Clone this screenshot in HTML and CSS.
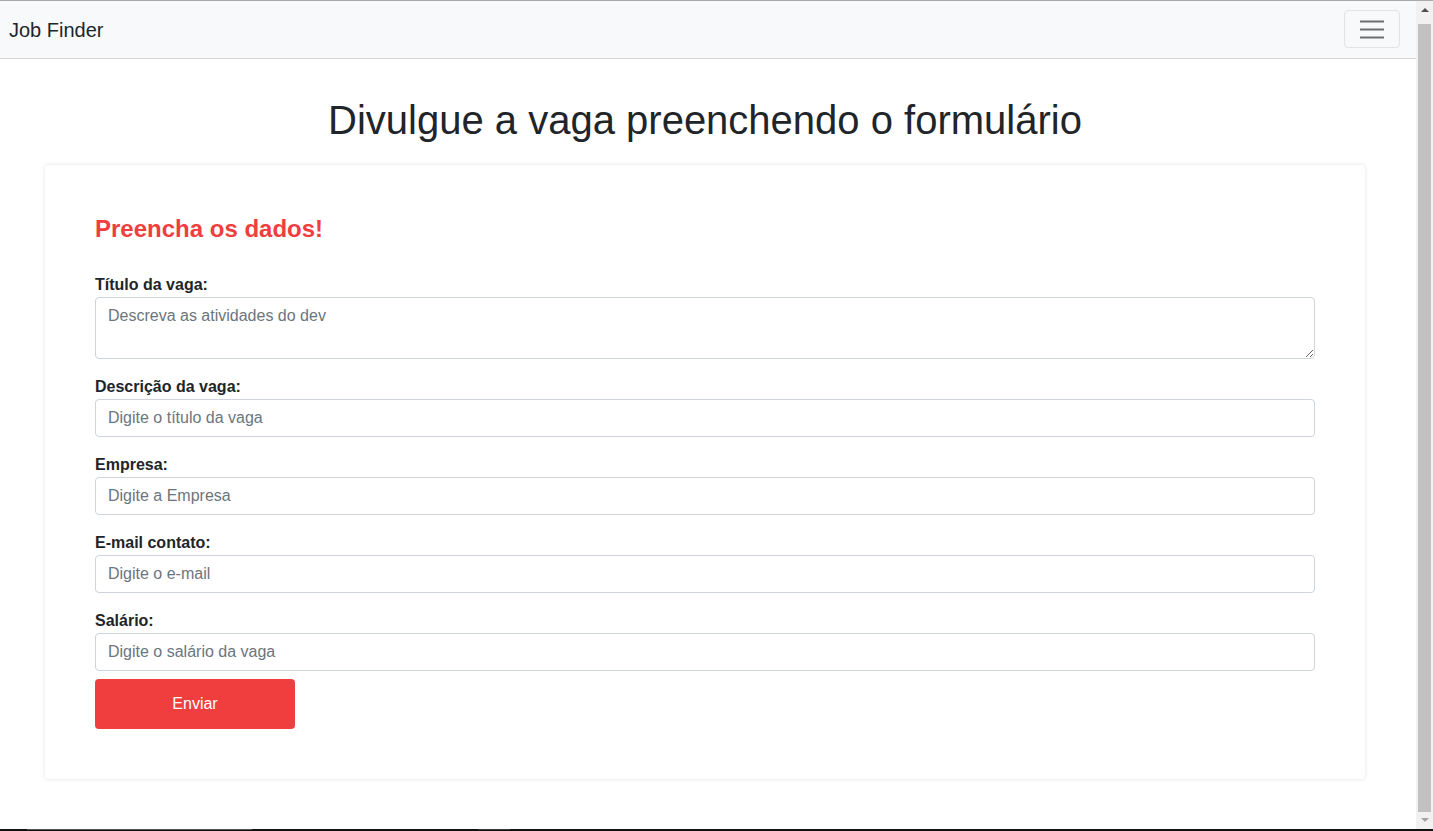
FILE: index.html
```html
<!DOCTYPE html>
<html lang="pt-BR">
<head>
<meta charset="utf-8">
<title>Job Finder</title>
<link rel="stylesheet" href="styles.css">
</head>
<body>
<div class="top-line"></div>
<div class="frame">
  <div class="page">
    <nav class="navbar">
      <a class="brand" href="#">Job Finder</a>
      <button class="toggler" type="button" aria-label="Menu">
        <svg width="30" height="30" viewBox="0 0 30 30" aria-hidden="true">
          <path d="M3 7.5h24M3 15.5h24M3 23.5h24" stroke="#6f6f6f" stroke-width="2" fill="none"/>
        </svg>
      </button>
    </nav>
    <main class="container">
      <h1 class="title">Divulgue a vaga preenchendo o formulário</h1>
      <section class="card">
        <h2 class="card-title">Preencha os dados!</h2>
        <form class="form">
          <div class="group">
            <label class="label" for="titulo">Título da vaga:</label>
            <textarea id="titulo" class="field area" placeholder="Descreva as atividades do dev"></textarea>
          </div>
          <div class="group">
            <label class="label" for="desc">Descrição da vaga:</label>
            <input id="desc" class="field" type="text" placeholder="Digite o título da vaga">
          </div>
          <div class="group">
            <label class="label" for="empresa">Empresa:</label>
            <input id="empresa" class="field" type="text" placeholder="Digite a Empresa">
          </div>
          <div class="group">
            <label class="label" for="email">E-mail contato:</label>
            <input id="email" class="field" type="text" placeholder="Digite o e-mail">
          </div>
          <div class="group last">
            <label class="label" for="salario">Salário:</label>
            <input id="salario" class="field" type="text" placeholder="Digite o salário da vaga">
          </div>
          <button class="submit" type="button">Enviar</button>
        </form>
      </section>
    </main>
  </div>
  <div class="scrollbar">
    <div class="arrow up"></div>
    <div class="thumb"></div>
    <div class="arrow down"></div>
  </div>
</div>
<div class="bottom-line">
  <span class="seg seg1"></span>
  <span class="seg seg2"></span>
</div>
</body>
</html>
```
FILE: styles.css
```css
* { box-sizing: border-box; }
html, body { margin: 0; padding: 0; }
body {
  width: 1433px;
  height: 831px;
  overflow: hidden;
  display: flex;
  flex-direction: column;
  font-family: "Liberation Sans", Arial, sans-serif;
  color: #212529;
  background: #fff;
}
.top-line { height: 1px; background: #a8a8a8; flex: none; }
.frame { height: 828px; display: flex; flex: none; }
.page { flex: 1; min-width: 0; background: #fff; }
.bottom-line { height: 2px; background: #111; flex: none; display: flex; }
.seg { height: 1px; background: #555; }
.seg1 { margin-left: 27px; width: 225px; }
.seg2 { margin-left: 226px; width: 32px; background: #3a3a3a; }

.navbar {
  height: 58px;
  background: #f8f9fa;
  border-bottom: 1px solid #d5d6d7;
  display: flex;
  align-items: center;
  justify-content: space-between;
  padding: 0 16px 0 9px;
}
.brand {
  font-size: 20px;
  color: #212529;
  text-decoration: none;
  line-height: 30px;
  margin-top: 1px;
}
.toggler {
  width: 56px;
  height: 38px;
  margin-top: -1px;
  border: 1px solid #e2e3e4;
  border-radius: 4px;
  background: transparent;
  display: flex;
  align-items: center;
  justify-content: center;
  padding: 0;
}

.container { width: 1320px; margin-left: 45px; }
.title {
  margin: 37px 0 21px;
  font-size: 40px;
  line-height: 48px;
  font-weight: 400;
  text-align: center;
}
.card {
  background: #fff;
  border-radius: 4px;
  box-shadow: 0 0 4px rgba(0,0,0,0.12);
  padding: 49px 50px 50px;
}
.card-title {
  margin: 0 0 29px;
  font-size: 24px;
  line-height: 29px;
  font-weight: 700;
  color: #f03e3e;
}
.group { margin-bottom: 15px; }
.group.last { margin-bottom: 8px; }
.label {
  display: block;
  font-size: 16px;
  line-height: 24px;
  font-weight: 700;
  padding-top: 1px;
  margin-bottom: 0;
}
.field {
  display: block;
  width: 100%;
  height: 38px;
  padding: 6px 12px;
  font-family: inherit;
  font-size: 16px;
  line-height: 24px;
  color: #212529;
  border: 1px solid #ced4da;
  border-radius: 4px;
  background: #fff;
  margin: 0;
}
.area { height: 62px; resize: vertical; }
.field::placeholder { color: #6c757d; opacity: 1; }
.submit {
  display: block;
  width: 200px;
  height: 50px;
  border: 0;
  border-radius: 4px;
  background: #f03e3e;
  color: #fff;
  font-family: inherit;
  font-size: 16px;
}

.scrollbar {
  width: 17px;
  flex: none;
  background: #f1f1f1;
  display: flex;
  flex-direction: column;
  align-items: center;
}
.arrow { width: 0; height: 0; border-left: 4px solid transparent; border-right: 4px solid transparent; }
.arrow.up { margin-top: 7px; border-bottom: 4px solid #505050; }
.arrow.down { margin-top: 6px; border-top: 4px solid #a3a3a3; }
.thumb { width: 13px; height: 788px; margin-top: 12px; background: #c1c1c1; }
```
